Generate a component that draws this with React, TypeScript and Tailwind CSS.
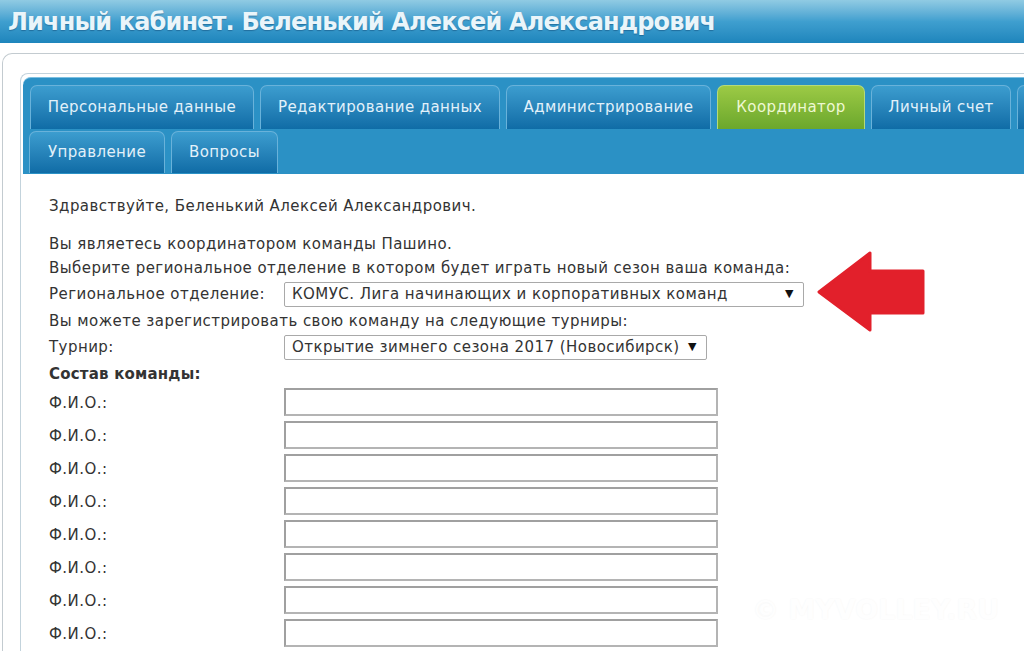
export default function App() {
  const row1 = [
    { label: "Персональные данные", w: "w-[224px]" },
    { label: "Редактирование данных", w: "w-[240px]" },
    { label: "Администрирование", w: "w-[205px]" },
    { label: "Координатор", w: "w-[148px]", active: true },
    { label: "Личный счет", w: "w-[140px]" },
    { label: "", w: "w-[120px]" },
  ];
  const row2 = [
    { label: "Управление", w: "w-[136px]" },
    { label: "Вопросы", w: "w-[107px]" },
  ];

  const tabClass = (active?: boolean) =>
    active
      ? "bg-gradient-to-b from-[#9cca45] to-[#6ba72c] text-[#eef8d2] border-[#b5da7a]"
      : "bg-gradient-to-b from-[#3c9dcf] to-[#0f6ca6] text-[#e2f1fa] border-[#69b2da]";

  return (
    <div className="relative w-[1024px] h-[651px] overflow-hidden bg-white font-['DejaVu_Sans',sans-serif]">
      {/* Header */}
      <header className="h-[43px] bg-gradient-to-b from-[#90cbe3] via-[#3f9fcf] to-[#1d85bc] pl-[8px] flex items-center">
        <h1 className="text-[24px] font-bold text-[#eaf5fa] tracking-[-0.85px] whitespace-nowrap [text-shadow:0_1px_1px_rgba(0,40,80,0.35)]">
          Личный кабинет. Беленький Алексей Александрович
        </h1>
      </header>

      <div className="pt-[10px] pl-[2px]">
        <div className="border-t border-l border-[#c3cbd0] rounded-tl-[10px] pt-[19px] pl-[17px]">
          <div className="border-t border-l border-[#c3d3dc] rounded-tl-[8px] pt-[3px]">
            {/* Tabs */}
            <nav className="ml-[2px] bg-[#2b91c5] rounded-tl-[8px] pt-[7px] pl-[7px] pb-[1px] flex flex-col gap-[2px] border-t border-[#7cc0e2]">
              <div className="flex gap-[6px] whitespace-nowrap">
                {row1.map((t, i) => (
                  <div
                    key={i}
                    className={`${t.w} shrink-0 h-[44px] rounded-t-[7px] border border-b-0 flex items-center justify-center text-[15px] tracking-[0.4px] ${tabClass(t.active)}`}
                  >
                    {t.label}
                  </div>
                ))}
              </div>
              <div className="flex gap-[6px] -ml-px">
                {row2.map((t) => (
                  <div
                    key={t.label}
                    className={`${t.w} shrink-0 h-[42px] rounded-t-[7px] border border-b-0 flex items-center justify-center text-[15px] tracking-[0.4px] ${tabClass()}`}
                  >
                    {t.label}
                  </div>
                ))}
              </div>
            </nav>

            {/* Content */}
            <main className="pl-[28px] pt-[20px] text-[15px] tracking-[0.45px] text-[#333] h-[500px]">
              <p className="h-[24px] leading-[24px]">Здравствуйте, Беленький Алексей Александрович.</p>
              <p className="mt-[14px] h-[24px] leading-[24px]">Вы являетесь координатором команды Пашино.</p>
              <p className="h-[24px] leading-[24px] whitespace-nowrap">
                Выберите региональное отделение в котором будет играть новый сезон ваша команда:
              </p>
              <div className="flex items-center h-[27px] mt-px">
                <span className="w-[235px] shrink-0">Региональное отделение:</span>
                <div className="w-[520px] h-[25px] border border-[#a9a9a9] rounded-[2px] flex items-center justify-between pl-[7px] pr-[9px] bg-white">
                  <span className="whitespace-nowrap">КОМУС. Лига начинающих и корпоративных команд</span>
                  <span className="text-[11px] text-[#111]">▼</span>
                </div>
              </div>
              <p className="h-[26px] leading-[26px]">Вы можете зарегистрировать свою команду на следующие турниры:</p>
              <div className="flex items-center h-[27px]">
                <span className="w-[235px] shrink-0">Турнир:</span>
                <div className="w-[423px] h-[25px] border border-[#a9a9a9] rounded-[2px] flex items-center justify-between pl-[7px] pr-[9px] bg-white">
                  <span className="whitespace-nowrap">Открытие зимнего сезона 2017 (Новосибирск)</span>
                  <span className="text-[11px] text-[#111]">▼</span>
                </div>
              </div>
              <p className="h-[27px] leading-[27px] font-bold tracking-[0.2px]">Состав команды:</p>
              <div className="flex flex-col gap-[5px]">
                {Array.from({ length: 8 }).map((_, i) => (
                  <div key={i} className="flex items-center h-[28px]">
                    <span className="w-[235px] shrink-0 pt-[3px]">Ф.И.О.:</span>
                    <div className="w-[434px] h-[28px] border-2 border-[#b4b4b4] border-t-[#a0a0a0] border-l-[#a0a0a0] bg-white" />
                  </div>
                ))}
              </div>
            </main>
          </div>
        </div>
      </div>

      {/* Red annotation arrow */}
      <svg className="absolute left-[817px] top-[251px]" width="110" height="82" viewBox="0 0 110 82">
        <polygon
          points="2,41 53,2 53,20 106,20 106,62 53,62 53,79"
          fill="#e2202b"
          stroke="#e2202b"
          strokeWidth="3"
          strokeLinejoin="round"
        />
      </svg>

      {/* Watermark */}
      <div className="absolute left-[752px] top-[590px] text-[27px] font-bold text-white/90 whitespace-nowrap [text-shadow:0_0_2px_rgba(0,0,0,0.05)]">
        © MYVOLLEY.RU
      </div>
    </div>
  );
}
